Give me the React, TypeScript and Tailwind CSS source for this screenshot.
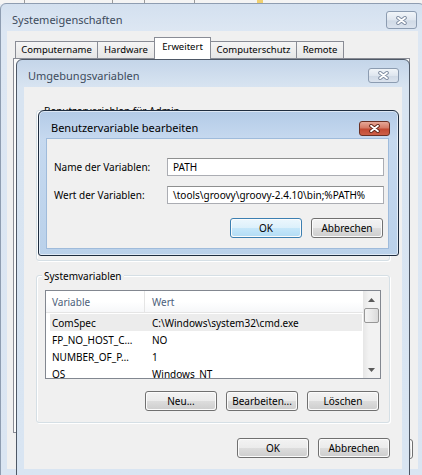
import React from 'react';

function XGlyph({ outline }: { outline: string }) {
  return (
    <svg width="11" height="9" viewBox="0 0 11 9">
      <path d="M2 1.8 L9 7.2 M9 1.8 L2 7.2" stroke={outline} strokeWidth="3.6" strokeLinecap="round" />
      <path d="M2 1.8 L9 7.2 M9 1.8 L2 7.2" stroke="#ffffff" strokeWidth="1.8" strokeLinecap="round" />
    </svg>
  );
}

function CloseBtn({ active = false, tall = false }: { active?: boolean; tall?: boolean }) {
  return (
    <div
      className={`w-[31px] ${tall ? 'h-[18px]' : 'h-[15px]'} rounded-[3px] border flex items-center justify-center ${
        active
          ? 'border-[#6b3024] bg-[linear-gradient(#e6a898,#d57a66_45%,#c24a33_55%,#cd5f48)]'
          : 'border-[#8c9cb1] bg-[linear-gradient(#f1f5f9,#dfe6ef_50%,#d0dae6_55%,#dbe3ee)]'
      }`}
    >
      <XGlyph outline={active ? '#5e2318' : '#7d8ba0'} />
    </div>
  );
}

function Button({ label, def = false }: { label?: string; def?: boolean }) {
  return (
    <div className={`w-[72px] h-[20px] rounded-[3px] border p-px bg-white/70 ${def ? 'border-[#3c7fb1]' : 'border-[#707070]'}`}>
      <div
        className={`h-full rounded-[2px] flex items-center justify-center text-[10px] leading-[14px] text-black ${
          def
            ? 'bg-[linear-gradient(#eaf6fd_0%,#dcf0fb_50%,#c6e7fa_50%,#b4ddf5_100%)]'
            : 'bg-[linear-gradient(#f2f2f2_0%,#ebebeb_50%,#dddddd_50%,#cfcfcf_100%)]'
        }`}
      >
        {label}
      </div>
    </div>
  );
}

function Group({ label, className, children }: { label: string; className: string; children?: React.ReactNode }) {
  return (
    <div className={`relative rounded-[3px] border border-[#d5dfe5] shadow-[inset_1px_1px_0_#ffffff,1px_1px_0_#ffffff] ${className}`}>
      <div className="absolute left-[5px] -top-[7px] px-[2px] bg-[#f0f0f0] text-[10px] leading-[14px] text-black whitespace-nowrap">
        {label}
      </div>
      {children}
    </div>
  );
}

function Arrow({ up }: { up: boolean }) {
  return (
    <svg width="7" height="4" viewBox="0 0 7 4">
      <path d={up ? 'M0 4 L3.5 0 L7 4 Z' : 'M0 0 L3.5 4 L7 0 Z'} fill="#5a5a5a" />
    </svg>
  );
}

const tabs = [
  { label: 'Computername', w: 'w-[83px]' },
  { label: 'Hardware', w: 'w-[58px]' },
  { label: 'Erweitert', w: 'w-[57px]', sel: true },
  { label: 'Computerschutz', w: 'w-[87px]' },
  { label: 'Remote', w: 'w-[48px]' },
];

const rows = [
  { name: 'ComSpec', value: 'C:\\Windows\\system32\\cmd.exe', sel: true },
  { name: 'FP_NO_HOST_C…', value: 'NO' },
  { name: 'NUMBER_OF_P…', value: '1' },
  { name: 'OS', value: 'Windows_NT' },
];

export default function App() {
  return (
    <div className="relative w-[422px] h-[475px] overflow-hidden bg-[#e6ecf3] font-['Noto_Sans',sans-serif]">
      {/* bits of whatever lies behind */}
      <div className="absolute left-0 top-0 w-full h-[4px] flex bg-[#f4f4f4]">
        <div className="w-[25px] border-r border-[#9a9a9a]" />
        <div className="w-[88px] border-r border-[#9a9a9a]" />
        <div className="w-[32px] border-r border-[#9a9a9a]" />
        <div className="w-[50px] border-r border-[#9a9a9a]" />
        <div className="w-[62px]" />
        <div className="w-[6px] bg-[#f0d070]" />
      </div>

      {/* Systemeigenschaften */}
      <div className="absolute left-0 top-[3px] w-[425px] h-[480px] rounded-t-[6px] border border-[#8e9db1] bg-[linear-gradient(#d3e0ef,#dde7f3_27px,#dae5f2)] px-[6px] flex flex-col">
        <div className="h-[27px] flex items-start justify-between">
          <div className="mt-[9px] ml-[5px] text-[11px] leading-[14px] text-[#3d4b5c]">Systemeigenschaften</div>
          <div className="mt-[7px] mr-px">
            <CloseBtn tall />
          </div>
        </div>
        <div className="h-[438px] bg-[#f0f0f0] flex flex-col">
          <div className="relative z-10 mt-[6px] ml-[8px] h-[21px] flex items-end">
            {tabs.map((t) => (
              <div
                key={t.label}
                className={`${t.w} -mr-px border border-b-0 border-[#898c95] flex items-center justify-center text-[9.5px] leading-[12px] text-black ${
                  t.sel ? 'h-[22px] -mb-px bg-white pb-[4px]' : 'h-[17px] bg-[linear-gradient(#f5f5f5,#e6e6e6)]'
                }`}
              >
                {t.label}
              </div>
            ))}
          </div>
          <div className="ml-[6px] w-[397px] h-[375px] border border-[#898c95] bg-[#fbfbfb]" />
          {/* OK / Abbrechen / Übernehmen, hidden behind the child window */}
          <div className="mt-[6px] mr-[5px] flex justify-end gap-[7px]">
            <Button />
            <Button />
            <Button />
          </div>
        </div>
      </div>

      {/* Umgebungsvariablen */}
      <div className="absolute left-[16px] top-[59px] w-[394px] h-[424px] rounded-t-[6px] border border-[#4e5866] bg-[linear-gradient(#c4d5e9,#d8e4f1_27px,#d9e5f2)] px-[7px] flex flex-col">
        <div className="h-[27px] flex items-start justify-between">
          <div className="mt-[9px] ml-[4px] text-[11px] leading-[14px] text-[#3d4b5c]">Umgebungsvariablen</div>
          <div className="mt-[8px] mr-[3px]">
            <CloseBtn />
          </div>
        </div>
        <div className="h-[382px] bg-[#f0f0f0] pl-[12px] pr-[12px] flex flex-col">
          <Group label="Benutzervariablen für Admin" className="mt-[23px] h-[151px]" />
          <Group label="Systemvariablen" className="mt-[14px] h-[148px] pl-[8px] pt-[14px] pr-[10px] flex flex-col">
            <div className="w-[336px] h-[89px] border border-[#828790] bg-white flex overflow-hidden">
              <div className="flex-1 flex flex-col">
                <div className="h-[22px] shrink-0 flex border-b border-[#e5e5e5] bg-[linear-gradient(#ffffff,#ffffff_50%,#f6f7f9)] text-[10px] leading-[14px] text-[#4c607a]">
                  <div className="w-[99px] border-r border-[#e5e5e5] pl-[6px] flex items-center">Variable</div>
                  <div className="flex-1 pl-[7px] flex items-center">Wert</div>
                </div>
                <div className="pt-px pl-[4px] pr-px flex flex-col">
                  {rows.map((r) => (
                    <div
                      key={r.name}
                      className={`h-[17px] shrink-0 flex items-center text-[10px] leading-[14px] text-black ${r.sel ? 'bg-[#ececec]' : ''}`}
                    >
                      <div className="w-[100px] pl-[2px] whitespace-nowrap overflow-hidden">{r.name}</div>
                      <div className="flex-1 pl-[2px] whitespace-nowrap">{r.value}</div>
                    </div>
                  ))}
                </div>
              </div>
              <div className="w-[17px] flex flex-col bg-[linear-gradient(90deg,#e6e6e6,#f2f2f2_35%,#f2f2f2)]">
                <div className="h-[17px] shrink-0 flex items-center justify-center">
                  <Arrow up />
                </div>
                <div className="h-[15px] shrink-0 mx-px rounded-[2px] border border-[#979797] bg-[linear-gradient(90deg,#f4f4f4,#e9e9e9_50%,#dadada)]" />
                <div className="flex-1" />
                <div className="h-[17px] shrink-0 flex items-center justify-center">
                  <Arrow up={false} />
                </div>
              </div>
            </div>
            <div className="mt-[12px] flex justify-end gap-[9px]">
              <Button label="Neu..." />
              <Button label="Bearbeiten..." />
              <Button label="Löschen" />
            </div>
          </Group>
          <div className="mt-[15px] flex justify-end gap-[9px]">
            <Button label="OK" />
            <Button label="Abbrechen" />
          </div>
        </div>
      </div>

      {/* Benutzervariable bearbeiten */}
      <div className="absolute left-[38px] top-[110px] w-[361px] h-[146px] rounded-t-[6px] rounded-b-[3px] border border-[#1f2d3f] bg-[linear-gradient(#b3cbe7,#c6d9ef_28px,#bad1ea)] shadow-[inset_0_0_0_1px_rgba(255,255,255,0.55)] pl-[8px] pr-[10px] flex flex-col">
        <div className="h-[28px] flex items-start justify-between">
          <div className="mt-[10px] ml-[4px] text-[11px] leading-[14px] text-black">Benutzervariable bearbeiten</div>
          <div className="mt-[10px] -mr-[2px]">
            <CloseBtn active />
          </div>
        </div>
        <div className="h-[109px] bg-[#f0f0f0] shadow-[0_0_0_1px_#9fbbdb] pl-[7px] pr-[4px] pt-[19px] flex flex-col">
          <div className="flex items-center">
            <div className="w-[113px] text-[10px] leading-[14px] text-black">Name der Variablen:</div>
            <div className="w-[217px] h-[18px] border border-[#abadb3] border-t-[#8e8f8f] bg-white pl-[5px] flex items-center text-[10px] leading-[14px] text-black">
              PATH
            </div>
          </div>
          <div className="mt-[10px] flex items-center">
            <div className="w-[113px] text-[10px] leading-[14px] text-black">Wert der Variablen:</div>
            <div className="w-[217px] h-[18px] border border-[#abadb3] border-t-[#8e8f8f] bg-white pl-[5px] flex items-center overflow-hidden whitespace-nowrap text-[10px] leading-[14px] text-black">
              {'\\tools\\groovy\\groovy-2.4.10\\bin;%PATH%'}
            </div>
          </div>
          <div className="mt-[14px] mr-px flex justify-end gap-[9px]">
            <Button label="OK" def />
            <Button label="Abbrechen" />
          </div>
        </div>
      </div>
    </div>
  );
}
